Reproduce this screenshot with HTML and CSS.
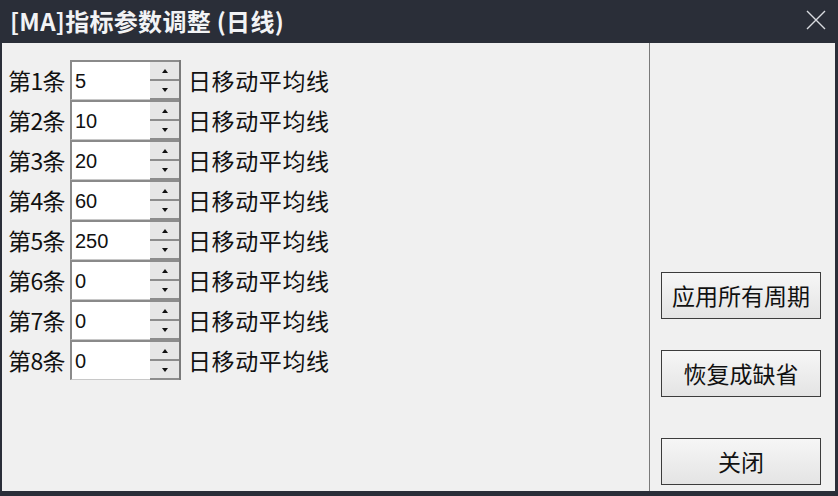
FILE: index.html
```html
<!DOCTYPE html>
<html lang="zh">
<head>
<meta charset="utf-8">
<link rel="stylesheet" href="styles.css">
</head>
<body>
<div class="window">
  <div class="titlebar">
    <span class="title">[MA]指标参数调整 (日线)</span>
    <svg class="close" width="20" height="20" viewBox="0 0 20 20"><path d="M1 1 L19 19 M19 1 L1 19" stroke="#d8dbe0" stroke-width="1.4" fill="none"/></svg>
  </div>
  <div class="content">
    <div class="left">
      <div class="row"><span class="lbl">第1条</span><div class="field"><span class="val">5</span></div><div class="spin"><div class="up"><i class="tri-up"></i></div><div class="down"><i class="tri-down"></i></div></div><span class="unit">日移动平均线</span></div>
      <div class="row"><span class="lbl">第2条</span><div class="field"><span class="val">10</span></div><div class="spin"><div class="up"><i class="tri-up"></i></div><div class="down"><i class="tri-down"></i></div></div><span class="unit">日移动平均线</span></div>
      <div class="row"><span class="lbl">第3条</span><div class="field"><span class="val">20</span></div><div class="spin"><div class="up"><i class="tri-up"></i></div><div class="down"><i class="tri-down"></i></div></div><span class="unit">日移动平均线</span></div>
      <div class="row"><span class="lbl">第4条</span><div class="field"><span class="val">60</span></div><div class="spin"><div class="up"><i class="tri-up"></i></div><div class="down"><i class="tri-down"></i></div></div><span class="unit">日移动平均线</span></div>
      <div class="row"><span class="lbl">第5条</span><div class="field"><span class="val">250</span></div><div class="spin"><div class="up"><i class="tri-up"></i></div><div class="down"><i class="tri-down"></i></div></div><span class="unit">日移动平均线</span></div>
      <div class="row"><span class="lbl">第6条</span><div class="field"><span class="val">0</span></div><div class="spin"><div class="up"><i class="tri-up"></i></div><div class="down"><i class="tri-down"></i></div></div><span class="unit">日移动平均线</span></div>
      <div class="row"><span class="lbl">第7条</span><div class="field"><span class="val">0</span></div><div class="spin"><div class="up"><i class="tri-up"></i></div><div class="down"><i class="tri-down"></i></div></div><span class="unit">日移动平均线</span></div>
      <div class="row"><span class="lbl">第8条</span><div class="field"><span class="val">0</span></div><div class="spin"><div class="up"><i class="tri-up"></i></div><div class="down"><i class="tri-down"></i></div></div><span class="unit">日移动平均线</span></div>
    </div>
    <div class="right">
      <div class="btn b1">应用所有周期</div>
      <div class="btn b2">恢复成缺省</div>
      <div class="btn b3">关闭</div>
    </div>
  </div>
</div>
</body>
</html>
```

FILE: styles.css
```css
html, body {
  margin: 0;
  padding: 0;
  background: #2a2e38;
}
.window {
  width: 838px;
  height: 496px;
  display: flex;
  flex-direction: column;
  background: #2a2e38;
  font-family: "Noto Sans CJK SC", "Noto Sans", sans-serif;
  color: #111;
  overflow: hidden;
}
.titlebar {
  height: 43px;
  flex: none;
  display: flex;
  align-items: center;
  justify-content: space-between;
  padding: 0 12px 0 10px;
  box-sizing: border-box;
}
.title {
  color: #f2f3f5;
  font-size: 24px;
  font-weight: 700;
  letter-spacing: 0.3px;
  line-height: 1;
  padding-bottom: 2px;
}
.close {
  margin-top: -4px;
}
.content {
  display: flex;
  height: 448px;
  flex: none;
  margin: 0 3px 0 2px;
  background: #f0f0f0;
}
.left {
  width: 648px;
  flex: none;
  padding: 17px 0 0 6px;
  box-sizing: border-box;
  border-right: 1px solid #7a7a7a;
}
.row {
  display: flex;
  align-items: center;
  height: 40px;
}
.lbl {
  font-size: 23px;
  width: 62px;
  letter-spacing: -0.6px;
  line-height: 1;
}
.field {
  width: 80px;
  height: 40px;
  box-sizing: border-box;
  background: #fff;
  border-top: 2px solid #8a8a8a;
  border-left: 2px solid #8a8a8a;
  border-bottom: 1px solid #c8c8c8;
  display: flex;
  align-items: center;
  padding-left: 3px;
}
.val {
  font-family: "Liberation Sans", Arial, sans-serif;
  font-size: 20px;
  line-height: 1;
}
.spin {
  width: 31px;
  height: 40px;
  display: flex;
  flex-direction: column;
  box-sizing: border-box;
  border-right: 2px solid #7a7a7a;
  margin-right: 7px;
}
.up, .down {
  flex: 1;
  display: flex;
  align-items: center;
  justify-content: center;
  background: #e6e6e6;
  border-top: 2px solid #8c8c8c;
}
.down {
  border-bottom: 2px solid #8c8c8c;
}
.tri-up {
  width: 0;
  height: 0;
  border-left: 3px solid transparent;
  border-right: 3px solid transparent;
  border-bottom: 4px solid #111;
}
.tri-down {
  width: 0;
  height: 0;
  border-left: 3px solid transparent;
  border-right: 3px solid transparent;
  border-top: 4px solid #111;
}
.unit {
  font-size: 23px;
  line-height: 1;
  letter-spacing: 0.6px;
}
.right {
  flex: 1;
  display: flex;
  flex-direction: column;
  align-items: flex-start;
  padding: 229px 0 0 11px;
}
.btn {
  width: 160px;
  height: 47px;
  box-sizing: border-box;
  border: 1px solid #3c3c3c;
  background: linear-gradient(#f6f6f6, #e4e4e4);
  display: flex;
  align-items: center;
  justify-content: center;
  font-size: 23px;
  line-height: 1;
}
.b2 { margin-top: 31px; }
.b3 { margin-top: 41px; }
```
